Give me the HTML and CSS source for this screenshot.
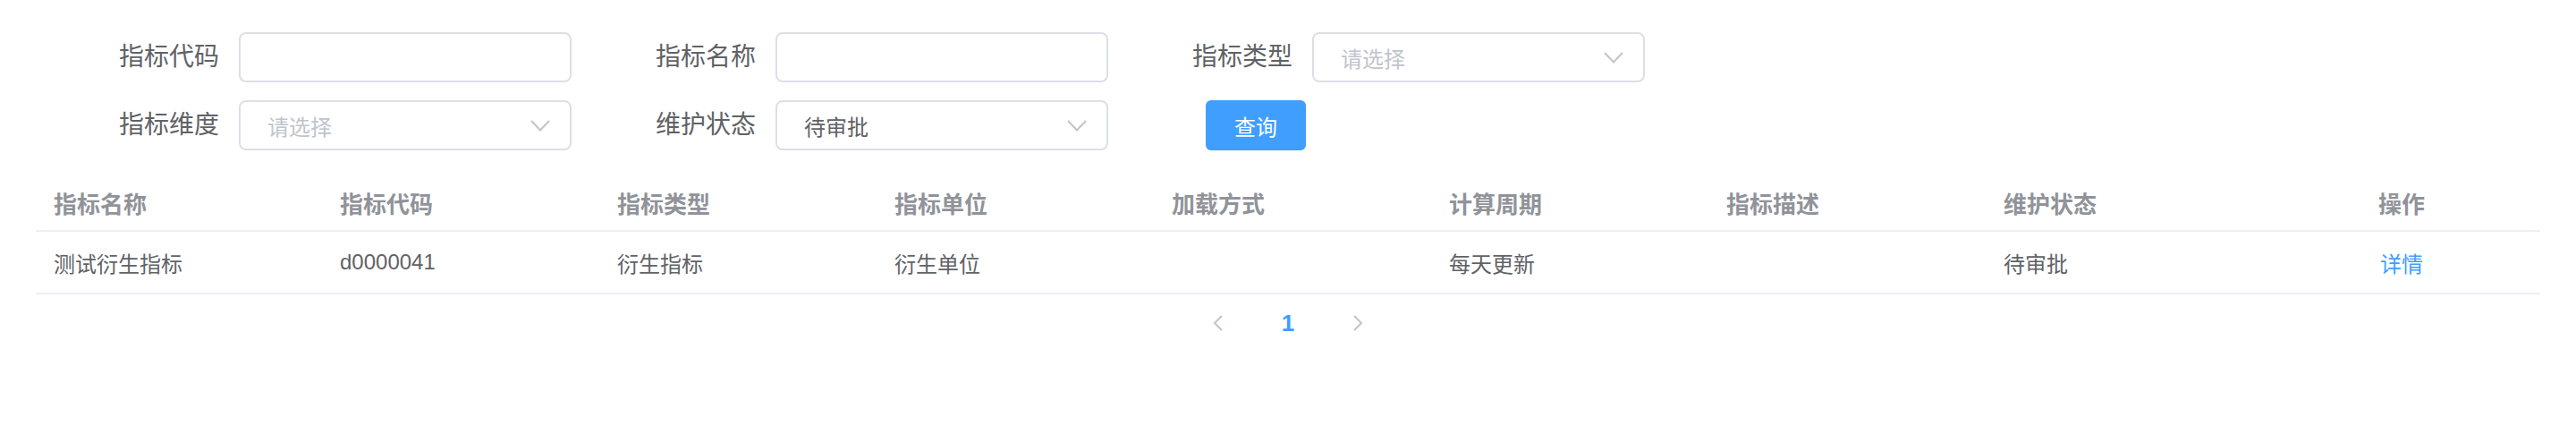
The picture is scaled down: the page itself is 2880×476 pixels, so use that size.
FILE: index.html
```html
<!DOCTYPE html>
<html lang="zh-CN">
<head>
<meta charset="utf-8">
<title>指标查询</title>
<link rel="stylesheet" href="styles.css">
</head>
<body>
<div class="page">
  <form class="search-form">
    <div class="form-row">
      <div class="form-item">
        <label class="form-label">指标代码</label>
        <div class="input"></div>
      </div>
      <div class="form-item">
        <label class="form-label">指标名称</label>
        <div class="input"></div>
      </div>
      <div class="form-item">
        <label class="form-label">指标类型</label>
        <div class="input select">
          <span class="placeholder">请选择</span>
          <svg class="caret" width="22" height="13" viewBox="0 0 22 13"><polyline points="1,1 11,11.5 21,1" fill="none" stroke="#C0C4CC" stroke-width="2"/></svg>
        </div>
      </div>
    </div>
    <div class="form-row">
      <div class="form-item">
        <label class="form-label">指标维度</label>
        <div class="input select">
          <span class="placeholder">请选择</span>
          <svg class="caret" width="22" height="13" viewBox="0 0 22 13"><polyline points="1,1 11,11.5 21,1" fill="none" stroke="#C0C4CC" stroke-width="2"/></svg>
        </div>
      </div>
      <div class="form-item">
        <label class="form-label">维护状态</label>
        <div class="input select">
          <span class="value">待审批</span>
          <svg class="caret" width="22" height="13" viewBox="0 0 22 13"><polyline points="1,1 11,11.5 21,1" fill="none" stroke="#C0C4CC" stroke-width="2"/></svg>
        </div>
      </div>
      <div class="form-actions">
        <button type="button" class="btn-primary">查询</button>
      </div>
    </div>
  </form>

  <table class="data-table">
    <colgroup>
      <col class="col-first">
      <col class="col"><col class="col"><col class="col"><col class="col">
      <col class="col"><col class="col"><col class="col"><col class="col">
    </colgroup>
    <thead>
      <tr>
        <th>指标名称</th>
        <th>指标代码</th>
        <th>指标类型</th>
        <th>指标单位</th>
        <th>加载方式</th>
        <th>计算周期</th>
        <th>指标描述</th>
        <th>维护状态</th>
        <th class="center">操作</th>
      </tr>
    </thead>
    <tbody>
      <tr>
        <td>测试衍生指标</td>
        <td>d0000041</td>
        <td>衍生指标</td>
        <td>衍生单位</td>
        <td></td>
        <td>每天更新</td>
        <td></td>
        <td>待审批</td>
        <td class="center"><a class="link">详情</a></td>
      </tr>
    </tbody>
  </table>

  <div class="pagination">
    <span class="btn-prev">
      <svg width="12" height="18" viewBox="0 0 12 18"><polyline points="10,1 2,9 10,17" fill="none" stroke="#C0C4CC" stroke-width="2"/></svg>
    </span>
    <span class="pager-item active">1</span>
    <span class="btn-next">
      <svg width="12" height="18" viewBox="0 0 12 18"><polyline points="2,1 10,9 2,17" fill="none" stroke="#C0C4CC" stroke-width="2"/></svg>
    </span>
  </div>
</div>
</body>
</html>
```

FILE: styles.css
```css
* {
  box-sizing: border-box;
}

html, body {
  margin: 0;
  padding: 0;
  background: #ffffff;
}

body {
  font-family: "Liberation Sans", "Noto Sans CJK SC", sans-serif;
  color: #606266;
}

.page {
  width: 2880px;
}

.search-form {
  padding: 36px 0 0 107px;
  display: flex;
  flex-direction: column;
  gap: 20px;
}

.form-row {
  display: flex;
  align-items: center;
  height: 56px;
}

.form-item {
  display: flex;
  align-items: center;
  margin-right: 68px;
}

.form-label {
  width: 160px;
  padding-right: 22px;
  text-align: right;
  font-size: 28px;
  line-height: 56px;
  color: #606266;
}

.input {
  width: 372px;
  height: 56px;
  border: 2px solid #DCDFE6;
  border-radius: 8px;
  background: #fff;
  display: flex;
  align-items: center;
  padding: 0 30px;
  font-size: 24px;
}

.select {
  justify-content: space-between;
  padding-right: 22px;
}

.placeholder {
  color: #C0C4CC;
}

.value {
  color: #606266;
}

.caret {
  display: block;
}

.form-actions {
  padding-left: 41px;
}

.btn-primary {
  width: 112px;
  height: 56px;
  border: none;
  border-radius: 6px;
  background: #409EFF;
  color: #fff;
  font-family: "Liberation Sans", "Noto Sans CJK SC", sans-serif;
  font-size: 24px;
  padding: 0;
}

.data-table {
  margin: 28px 0 0 40px;
  width: 2800px;
  border-collapse: collapse;
  table-layout: fixed;
}

.col-first {
  width: 320px;
}

.col {
  width: 310px;
}

.data-table th,
.data-table td {
  padding: 0 20px;
  text-align: left;
  border-bottom: 2px solid #EBEEF5;
  white-space: nowrap;
}

.data-table th {
  height: 62px;
  font-size: 26px;
  font-weight: bold;
  color: #909399;
}

.data-table td {
  height: 70px;
  font-size: 24px;
  color: #606266;
}

.data-table .center {
  text-align: center;
}

.link {
  color: #409EFF;
}

.pagination {
  margin-top: 4px;
  height: 56px;
  display: flex;
  justify-content: center;
  align-items: center;
}

.btn-prev,
.btn-next {
  width: 60px;
  height: 56px;
  display: flex;
  align-items: center;
}

.btn-prev {
  justify-content: flex-start;
  padding-left: 12px;
}

.btn-next {
  justify-content: flex-end;
  padding-right: 12px;
}

.btn-prev svg,
.btn-next svg {
  display: block;
}

.pager-item {
  width: 72px;
  text-align: center;
  font-size: 26px;
  line-height: 56px;
  font-weight: bold;
}

.pager-item.active {
  color: #409EFF;
}
```
